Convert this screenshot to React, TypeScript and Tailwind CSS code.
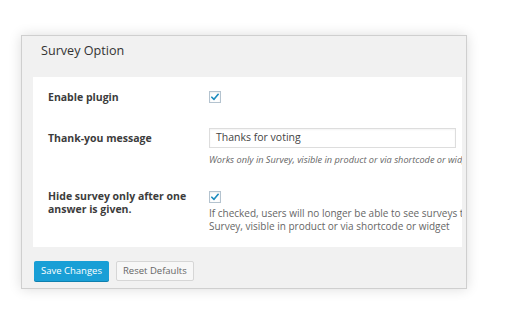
import React from 'react';

const Check: React.FC = () => (
  <div className="flex h-[12px] w-[12px] items-center justify-center border border-[#b4c3cf] bg-white shadow-[inset_0_1px_2px_rgba(0,0,0,0.08)]">
    <svg viewBox="0 0 12 12" className="h-[10px] w-[10px]">
      <path d="M2.2 6.3 L4.8 8.8 L9.8 2.8" fill="none" stroke="#1e8cbe" strokeWidth="2" strokeLinecap="round" strokeLinejoin="round" />
    </svg>
  </div>
);

const App: React.FC = () => {
  return (
    <div className="h-[324px] w-[510px] overflow-hidden bg-white pl-[21px] pt-[35px] font-['Open_Sans',sans-serif]">
      {/* Settings panel */}
      <div className="flex h-[254px] w-[446px] flex-col border border-[#cfcfcf] bg-[#f1f1f1] shadow-[0_0_12px_rgba(0,0,0,0.14)]">
        <div className="h-[41px] pl-[19px] pt-[5px]">
          <h2 className="text-[12.6px] font-medium leading-[19px] text-[#333]">Survey Option</h2>
        </div>

        <div className="ml-[11px] mr-[4px] h-[170px] overflow-hidden bg-white pl-[15px] pt-[12px]">
          {/* Enable plugin */}
          <div className="flex">
            <div className="w-[161px] shrink-0 text-[10.5px] font-bold leading-[16px] text-[#3c3c3c]">Enable plugin</div>
            <div className="pt-[2px]">
              <Check />
            </div>
          </div>

          {/* Thank-you message */}
          <div className="mt-[23px] flex">
            <div className="w-[161px] shrink-0 pt-[2px] text-[10.5px] font-bold leading-[16px] text-[#3c3c3c]">Thank-you message</div>
            <div className="shrink-0">
              <div className="flex h-[20px] w-[247px] items-center border border-[#dddddd] bg-white px-[6px] text-[10.5px] text-[#444] shadow-[inset_0_1px_2px_rgba(0,0,0,0.05)]">
                Thanks for voting
              </div>
              <p className="mt-[4px] whitespace-nowrap text-[9.2px] italic leading-[16px] text-[#666]">
                Works only in Survey, visible in product or via shortcode or widget
              </p>
            </div>
          </div>

          {/* Hide survey */}
          <div className="mt-[22px] flex">
            <div className="w-[161px] shrink-0 text-[10.5px] font-bold leading-[13px] text-[#3c3c3c]">
              Hide survey only after one
              <br />
              answer is given.
            </div>
            <div className="shrink-0 pt-[1px]">
              <Check />
              <p className="mt-[4px] whitespace-nowrap text-[10px] leading-[13px] text-[#666]">
                If checked, users will no longer be able to see surveys that were already answered in
                <br />
                Survey, visible in product or via shortcode or widget
              </p>
            </div>
          </div>
        </div>

        {/* Buttons */}
        <div className="flex gap-[7px] pl-[12px] pt-[14px]">
          <button className="h-[20px] rounded-[2px] bg-[#199fd6] px-[7px] text-[9.5px] leading-[20px] text-white shadow-[0_1px_0_#0e7fae]">
            Save Changes
          </button>
          <button className="h-[20px] rounded-[2px] border border-[#d6d6d6] bg-[#f7f7f7] px-[6px] text-[9.5px] leading-[18px] text-[#666]">
            Reset Defaults
          </button>
        </div>
      </div>
    </div>
  );
};

export default App;
